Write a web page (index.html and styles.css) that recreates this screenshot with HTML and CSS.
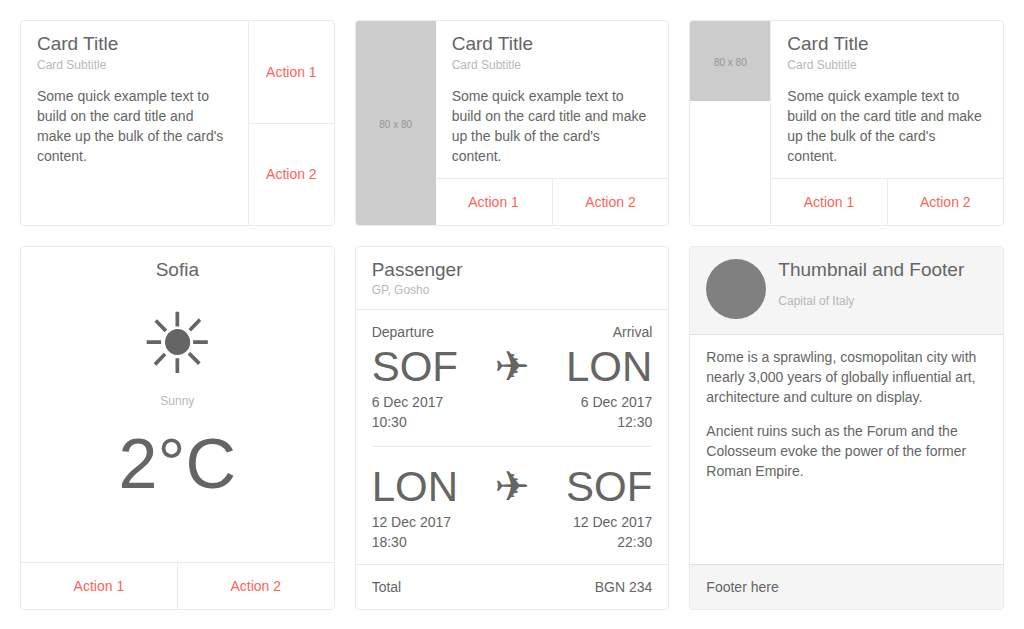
FILE: index.html
```html
<!DOCTYPE html>
<html lang="en">
<head>
<meta charset="utf-8">
<title>Cards</title>
<link rel="stylesheet" href="styles.css">
</head>
<body>
<main class="deck">
  <article class="card card-row">
    <div class="card-body">
      <h2 class="card-title">Card Title</h2>
      <p class="card-subtitle">Card Subtitle</p>
      <p class="card-text card-text-narrow">Some quick example text to build on the card title and make up the bulk of the card's content.</p>
    </div>
    <div class="actions actions-vertical">
      <button class="action" type="button">Action 1</button>
      <button class="action" type="button">Action 2</button>
    </div>
  </article>

  <article class="card card-row">
    <div class="media media-fill">80 x 80</div>
    <div class="card-main">
      <div class="card-body">
        <h2 class="card-title">Card Title</h2>
        <p class="card-subtitle">Card Subtitle</p>
        <p class="card-text">Some quick example text to build on the card title and make up the bulk of the card's content.</p>
      </div>
      <div class="actions">
        <button class="action" type="button">Action 1</button>
        <button class="action" type="button">Action 2</button>
      </div>
    </div>
  </article>

  <article class="card card-row">
    <div class="media">80 x 80</div>
    <div class="card-main card-main-divided">
      <div class="card-body">
        <h2 class="card-title">Card Title</h2>
        <p class="card-subtitle">Card Subtitle</p>
        <p class="card-text">Some quick example text to build on the card title and make up the bulk of the card's content.</p>
      </div>
      <div class="actions">
        <button class="action" type="button">Action 1</button>
        <button class="action" type="button">Action 2</button>
      </div>
    </div>
  </article>

  <article class="card">
    <div class="card-body weather">
      <h2 class="card-title">Sofia</h2>
      <div class="weather-icon">☀</div>
      <p class="card-subtitle">Sunny</p>
      <div class="weather-temp">2°C</div>
    </div>
    <div class="actions">
      <button class="action" type="button">Action 1</button>
      <button class="action" type="button">Action 2</button>
    </div>
  </article>

  <article class="card">
    <header class="card-header">
      <h2 class="card-title">Passenger</h2>
      <p class="card-subtitle">GP, Gosho</p>
    </header>
    <div class="card-body">
      <div class="line"><span>Departure</span><span>Arrival</span></div>
      <div class="route"><span>SOF</span><span class="plane">✈</span><span>LON</span></div>
      <div class="line"><span>6 Dec 2017</span><span>6 Dec 2017</span></div>
      <div class="line"><span>10:30</span><span>12:30</span></div>
      <hr class="separator">
      <div class="route"><span>LON</span><span class="plane">✈</span><span>SOF</span></div>
      <div class="line"><span>12 Dec 2017</span><span>12 Dec 2017</span></div>
      <div class="line"><span>18:30</span><span>22:30</span></div>
    </div>
    <footer class="card-footer line"><span>Total</span><span>BGN 234</span></footer>
  </article>

  <article class="card">
    <header class="card-header profile shaded">
      <div class="avatar"></div>
      <div class="profile-text">
        <h2 class="card-title">Thumbnail and Footer</h2>
        <p class="card-subtitle">Capital of Italy</p>
      </div>
    </header>
    <div class="card-body prose">
      <p>Rome is a sprawling, cosmopolitan city with nearly 3,000 years of globally influential art, architecture and culture on display.</p>
      <p>Ancient ruins such as the Forum and the Colosseum evoke the power of the former Roman Empire.</p>
    </div>
    <footer class="card-footer shaded">Footer here</footer>
  </article>
</main>
</body>
</html>
```

FILE: styles.css
```css
* {
  box-sizing: border-box;
}

body {
  margin: 0;
  background: #fff;
  color: #656565;
  font: 14px/20px "Liberation Sans", Arial, sans-serif;
}

h2, p {
  margin: 0;
}

.deck {
  display: grid;
  grid-template-columns: repeat(3, minmax(0, 1fr));
  gap: 20px;
  padding: 20px;
}

.card {
  display: flex;
  flex-direction: column;
  overflow: hidden;
  border: 1px solid #ebebeb;
  border-radius: 4px;
  background: #fff;
}

.card-row {
  flex-direction: row;
}

.card-main {
  display: flex;
  flex: 1;
  flex-direction: column;
  min-width: 0;
}

.card-main-divided {
  border-left: 1px solid #ebebeb;
}

.card-body {
  flex: 1;
  min-width: 0;
  padding: 12px 16px;
}

.card-title {
  font-size: 19px;
  font-weight: 400;
  line-height: 22px;
}

.card-subtitle {
  color: #b8b8b8;
  font-size: 12px;
  line-height: 17px;
}

.card-row .card-subtitle {
  margin: 2px 0 12px;
}

.card-text-narrow {
  padding-right: 4px;
}

.card-header {
  display: flex;
  flex-direction: column;
  gap: 1px;
  padding: 12px 16px 10px;
  border-bottom: 1px solid #ebebeb;
}

.card-footer {
  padding: 12px 16px;
  border-top: 1px solid #ebebeb;
}

.shaded {
  border-color: #e1e1e1;
  background: #f5f5f5;
}

.actions {
  display: flex;
  border-top: 1px solid #ebebeb;
}

.action {
  flex: 1;
  padding: 13px 17px;
  border: 0;
  background: transparent;
  color: #ff6358;
  font: inherit;
  cursor: pointer;
}

.action + .action {
  border-left: 1px solid #ebebeb;
}

.actions-vertical {
  flex-direction: column;
  border-top: 0;
  border-left: 1px solid #ebebeb;
}

.actions-vertical .action + .action {
  border-top: 1px solid #ebebeb;
  border-left: 0;
}

.media {
  display: flex;
  flex: none;
  align-items: center;
  justify-content: center;
  width: 80px;
  height: 80px;
  padding-top: 4px;
  background: #ccc;
  color: #969696;
  font-size: 10px;
}

.media-fill {
  height: auto;
}

.weather {
  text-align: center;
}

.weather-icon {
  margin: 21px 0 7px;
  font-family: "DejaVu Sans", sans-serif;
  font-size: 84px;
  line-height: 84px;
}

.weather-temp {
  margin-top: 14px;
  font-size: 70px;
  line-height: 80px;
}

.line {
  display: flex;
  justify-content: space-between;
}

.route {
  display: flex;
  justify-content: space-between;
  font-size: 42px;
  line-height: 50px;
}

.plane {
  font-family: "DejaVu Sans", sans-serif;
}

.separator {
  margin: 14px 0 15px;
  border: 0;
  border-top: 1px solid #ebebeb;
}

.profile {
  flex-direction: row;
  gap: 12px;
  padding-bottom: 15px;
}

.profile-text {
  display: flex;
  flex-direction: column;
  gap: 12px;
}

.avatar {
  flex: none;
  width: 60px;
  height: 60px;
  border-radius: 50%;
  background: #808080;
}

.prose {
  display: flex;
  flex-direction: column;
  gap: 14px;
}
```
